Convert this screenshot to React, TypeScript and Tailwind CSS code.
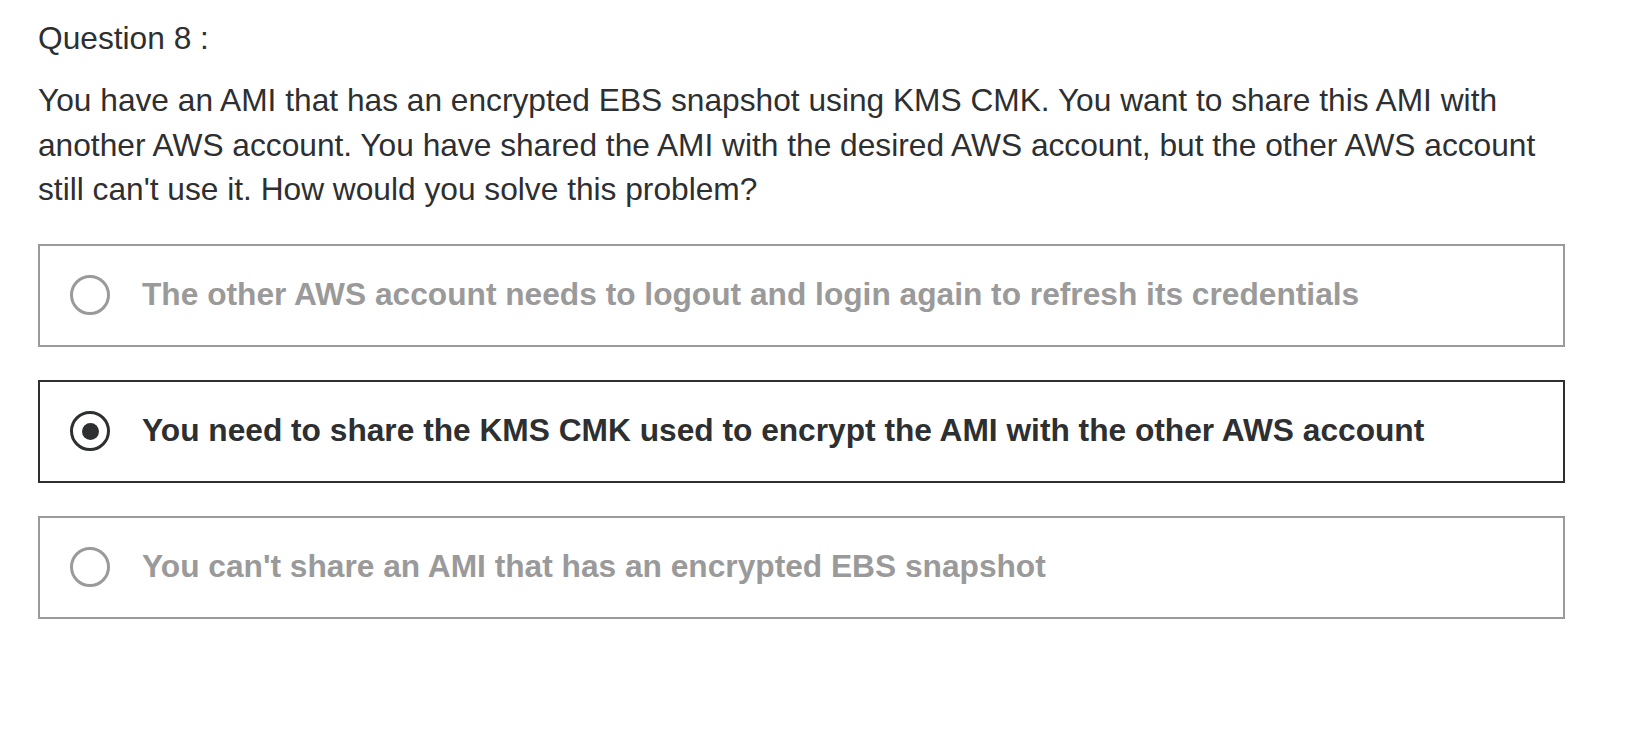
import React from "react";

const options = [
  { text: "The other AWS account needs to logout and login again to refresh its credentials", selected: false },
  { text: "You need to share the KMS CMK used to encrypt the AMI with the other AWS account", selected: true },
  { text: "You can't share an AMI that has an encrypted EBS snapshot", selected: false },
];

function Radio({ selected }: { selected: boolean }) {
  return (
    <div
      className={
        "flex h-[40px] w-[40px] shrink-0 items-center justify-center rounded-full border-[3px] " +
        (selected ? "border-[#2d2f31]" : "border-[#9a9a9a]")
      }
    >
      {selected && <div className="h-[17px] w-[17px] rounded-full bg-[#2d2f31]" />}
    </div>
  );
}

export default function App() {
  return (
    <div
      className="min-h-[744px] w-full bg-white pl-[38px] pr-[65px] pt-[16px] text-[#2d2f31]"
      style={{ fontFamily: '"Liberation Sans", Arial, sans-serif' }}
    >
      <div className="text-[31.7px] leading-[45px]">Question 8 :</div>
      <p className="mt-[17px] whitespace-nowrap text-[31.7px] leading-[44.5px]">
        You have an AMI that has an encrypted EBS snapshot using KMS CMK. You want to share this AMI with
        <br />
        another AWS account. You have shared the AMI with the desired AWS account, but the other AWS account
        <br />
        still can't use it. How would you solve this problem?
      </p>
      <div className="mt-[32px] flex flex-col gap-[33px]">
        {options.map((o, i) => (
          <div
            key={i}
            className={
              "flex h-[103px] items-center border-2 pl-[30px] " +
              (o.selected ? "border-[#2d2f31]" : "border-[#9a9a9a]")
            }
          >
            <Radio selected={o.selected} />
            <span
              className={
                "ml-[32px] whitespace-nowrap text-[31.7px] font-bold " +
                (o.selected ? "text-[#2d2f31]" : "text-[#9a9a9a]")
              }
            >
              {o.text}
            </span>
          </div>
        ))}
      </div>
    </div>
  );
}
